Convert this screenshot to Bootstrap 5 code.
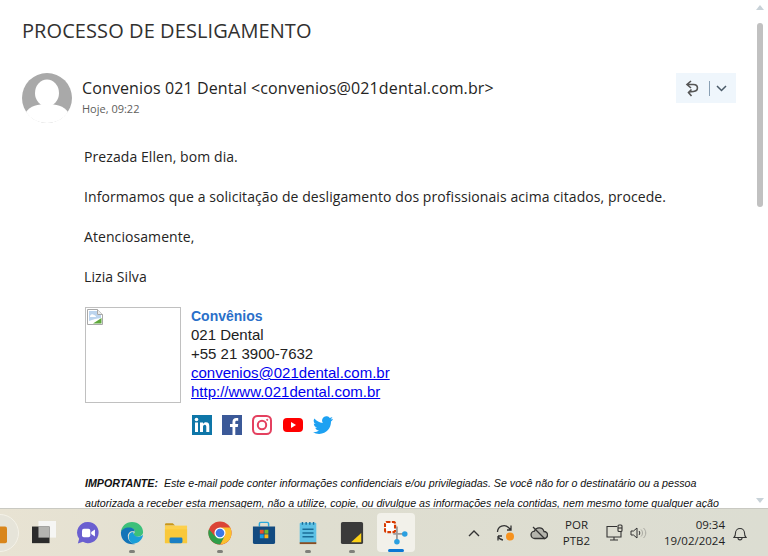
<!DOCTYPE html>
<html lang="pt-BR">
<head>
  <meta charset="UTF-8" />
  <meta name="viewport" content="width=device-width, initial-scale=1.0"/>
  <title>PROCESSO DE DESLIGAMENTO</title>
  <link href="https://cdn.jsdelivr.net/npm/bootstrap@5.3.2/dist/css/bootstrap.min.css" rel="stylesheet"/>
  <style>
    html, body { height: 100%; overflow: hidden; }
    body { font-family: "Open Sans", "Noto Sans", sans-serif; color: #252423; background: #fff; }
    .mail-window { height: 508px; overflow: hidden; }
    .mail-pane { padding: 17px 0 0 22px; overflow: hidden; }
    .mail-title { font-size: 20px; line-height: 28px; font-weight: 400; letter-spacing: .08px; margin: 0 0 28px; color: #323130; white-space: nowrap; }
    .mail-head { height: 50px; padding-right: 15px; }
    .mail-avatar { width: 50px; height: 50px; margin-right: 10px; flex: none; }
    .mail-from { font-size: 16px; line-height: 22px; letter-spacing: .12px; margin-top: 4px; white-space: nowrap; }
    .mail-date { font-size: 11px; line-height: 16px; color: #605e5c; margin-top: 2px; }
    .reply-box { width: 60px; height: 30px; background: #eff6fc; flex: none; }
    .reply-sep { width: 1px; height: 15px; background: #8aa0b4; margin: 0 6px 0 10px; }
    .mail-body { padding: 24px 0 0 63px; font-size: 14px; line-height: 20px; }
    .mail-body p { margin: 0 0 20px -1px; letter-spacing: .08px; white-space: nowrap; }
    .sig-photo { width: 96px; height: 96px; border: 1px solid #c0c0c0; padding: 1px; flex: none; margin-right: 10px; }
    .sig-text { font-family: "Liberation Sans", Arial, sans-serif; font-size: 15px; line-height: 19px; color: #212121; }
    .sig-text a { color: #0000ee; display: block; }
    .sig-name { color: #2a6fc9; font-size: 14px; line-height: 17px; padding-top: 1px; font-weight: 700; }
    .sig-social { gap: 10px; margin: 14px 0 0 1px; }
    .sig-social svg { display: block; width: 20px; height: 20px; }
    .sig-social .sig-yt { margin-left: 1px; }
    .mail-legal { font-family: "Liberation Sans", Arial, sans-serif; font-style: italic; font-size: 10.67px; line-height: 20px; color: #111; margin-top: 38px; width: 640px; }
    .mail-legal p { margin: 0; letter-spacing: 0; white-space: nowrap; }
    .scroll-rail { width: 17px; flex: none; padding-top: 5px; }
    .scroll-thumb { width: 6px; height: 184px; background: #c1c1c1; border-radius: 3px; margin: 13px auto 0; }
    .scroll-up { width: 0; height: 0; margin: 0 auto; border: 4px solid transparent; border-top: 0; border-bottom: 5px solid #c8d2d8; }
    .scroll-down { width: 0; height: 0; margin: 0 auto 5px; border: 4px solid transparent; border-bottom: 0; border-top: 5px solid #c8d2d8; }
    .task-bar { height: 48px; background: linear-gradient(90deg, #e8e3d3 0%, #dfded0 40%, #dcddd2 100%); border-top: 1px solid #c9c9c2; color: #1f1f1f; }
    .task-apps { margin-left: -22px; }
    .task-app { width: 44px; height: 47px; position: relative; }
    .task-app svg { display: block; width: 24px; height: 24px; }
    .task-dot { position: absolute; left: 19px; bottom: 3px; width: 6px; height: 3px; border-radius: 2px; background: #80807a; }
    .task-current { background: #f2f1ea; border-radius: 4px; height: 39px; margin: 4px 3px 0; width: 38px; }
    .task-current .task-dot { left: 11px; width: 16px; background: #0a78d4; bottom: 0; }
    .task-ball { width: 38px; height: 38px; border-radius: 50%; background: #e6e4d9; border: 1px solid #f4f2e8; flex: none; }
    .task-ball svg { margin-right: 11px; }
    .tray-item { height: 47px; flex: none; }
    .tray-item svg { display: block; }
    .tray-lang { width: 43px; font-size: 11.5px; line-height: 16px; text-align: center; }
    .tray-chev { width: 32px; }
    .tray-sync { width: 32px; }
    .tray-cloud { width: 33px; }
    .tray-net { width: 21px; margin-left: 6px; }
    .tray-vol { width: 22px; margin-left: 2px; }
    .tray-clock { width: 76px; font-size: 11.5px; line-height: 16px; text-align: right; }
    .tray-bell { width: 30px; margin-right: 13px; }
  </style>
</head>
<body class="d-flex flex-column">

  <!-- Mail -->
  <div class="mail-window d-flex">
    <div class="mail-pane flex-grow-1">
      <h1 class="mail-title">PROCESSO DE DESLIGAMENTO</h1>

      <div class="mail-head d-flex align-items-start">
        <svg class="mail-avatar" viewBox="0 0 50 50">
          <circle cx="25" cy="25" r="25" fill="#a9a9a9"/>
          <ellipse cx="25" cy="20" rx="12" ry="13.5" fill="#fff"/>
          <path d="M4 39c4-6 12-8 21-8s17 2 21 8c-4.500 7-12 11-21 11S8.500 46 4 39z" fill="#fff"/>
        </svg>
        <div class="flex-grow-1">
          <div class="mail-from">Convenios 021 Dental &lt;convenios@021dental.com.br&gt;</div>
          <div class="mail-date">Hoje, 09:22</div>
        </div>
        <div class="reply-box d-flex align-items-center justify-content-center">
          <svg width="14" height="17" viewBox="0 0 14 17" fill="none" stroke="#555" stroke-width="1.600">
            <path d="M6 1 2 4.500 6 8M2 4.500h6.500c5 0 5.500 6.500 0 7L4 12"/>
            <path d="M6.500 9.500 3.500 12.500l3 3.500"/>
          </svg>
          <span class="reply-sep"></span>
          <svg width="11" height="7" viewBox="0 0 11 7" fill="none" stroke="#4a5a68" stroke-width="1.500"><path d="M1 1l4.500 4.500L10 1"/></svg>
        </div>
      </div>

      <div class="mail-body">
        <p>Prezada Ellen, bom dia.</p>
        <p>Informamos que a solicitação de desligamento dos profissionais acima citados, procede.</p>
        <p>Atenciosamente,</p>
        <p>Lizia Silva</p>

        <div class="d-flex">
          <div class="sig-photo">
            <svg width="16" height="16" viewBox="0 0 16 16" class="d-block">
              <path d="M.5.500h10l5 5v10H.5z" fill="#fff" stroke="#a8a8a8"/>
              <path d="M2 2h8v4h4v3l-6 1-6 2z" fill="#bcd4ee"/>
              <path d="M3 7c1-2 3-2 4-1 1 0 2 1 2 2H3z" fill="#fff"/>
              <path d="M6 14.500 14.500 9v5.500z" fill="#5fa83c"/>
              <path d="M10.500.5v5h5" fill="#ececec" stroke="#a8a8a8"/>
            </svg>
          </div>
          <div class="sig-text">
            <div class="sig-name">Convênios</div>
            <div>021 Dental</div>
            <div>+55 21 3900-7632</div>
            <a href="#">convenios@021dental.com.br</a>
            <a href="#">http://www.021dental.com.br</a>
            <div class="sig-social d-flex">
              <svg viewBox="0 0 20 20"><rect width="20" height="20" fill="#0e76a8"/><rect x="3" y="7.500" width="3" height="9.500" fill="#fff"/><circle cx="4.500" cy="4.500" r="1.800" fill="#fff"/><path d="M8 7.500h3v1.400c.6-1 1.700-1.700 3-1.700 2.500 0 3.300 1.600 3.300 4V17h-3v-5c0-1.200-.3-2.200-1.500-2.200s-1.800 1-1.800 2.200v5H8z" fill="#fff"/></svg>
              <svg viewBox="0 0 20 20"><rect width="20" height="20" fill="#3b5998"/><path d="M10.500 20v-8H8V9h2.500V6.800C10.500 4.300 12 3 14.200 3c1 0 1.800.1 2 .1v2.600h-1.500c-1.100 0-1.400.6-1.400 1.400V9h2.900l-.4 3h-2.500v8z" fill="#fff"/></svg>
              <svg viewBox="0 0 20 20" fill="none" stroke="#e4405f" stroke-width="2"><rect x="1" y="1" width="18" height="18" rx="4.500"/><circle cx="10" cy="10" r="4.200"/><circle cx="15.200" cy="4.800" r=".6" fill="#e4405f" stroke-width="1"/></svg>
              <svg viewBox="0 0 20 20" class="sig-yt"><rect y="3" width="20" height="14" rx="4" fill="#f00"/><path d="M8 7l5 3-5 3z" fill="#fff"/></svg>
              <svg viewBox="0 0 20 20"><path d="M20 3.800c-.7.300-1.500.5-2.400.6.900-.5 1.500-1.300 1.800-2.300-.8.500-1.700.8-2.600 1A4.100 4.100 0 0 0 9.800 7.900 11.600 11.600 0 0 1 1.400 3.600a4.100 4.100 0 0 0 1.300 5.500c-.7 0-1.300-.2-1.900-.5 0 2 1.400 3.700 3.300 4.100-.6.200-1.200.2-1.900.1.500 1.600 2 2.800 3.800 2.800A8.200 8.200 0 0 1 0 17.300 11.600 11.600 0 0 0 6.300 19c7.500 0 11.700-6.400 11.700-11.900v-.5c.8-.6 1.500-1.300 2-2.800z" fill="#1da1f2"/></svg>
            </div>
          </div>
        </div>

        <div class="mail-legal">
          <p><b>IMPORTANTE:</b>&nbsp; Este e-mail pode conter informações confidenciais e/ou privilegiadas. Se você não for o destinatário ou a pessoa</p>
          <p>autorizada a receber esta mensagem, não a utilize, copie, ou divulgue as informações nela contidas, nem mesmo tome qualquer ação</p>
        </div>
      </div>
    </div>

    <!-- Scrollbar -->
    <div class="scroll-rail d-flex flex-column">
      <div class="scroll-up"></div>
      <div class="scroll-thumb"></div>
      <div class="scroll-down mt-auto"></div>
    </div>
  </div>

  <!-- Windows taskbar -->
  <div class="task-bar d-flex justify-content-between">
    <div class="task-apps d-flex">
      <div class="task-app d-flex align-items-center justify-content-center">
        <div class="task-ball d-flex align-items-center justify-content-end">
          <svg viewBox="0 0 26 26"><rect x="8" y="6" width="18" height="18" rx="2" fill="#d9861c"/></svg>
        </div>
      </div>
      <div class="task-app d-flex align-items-center justify-content-center">
        <svg viewBox="0 0 26 26"><rect x="7" y="0" width="19" height="18" fill="#f6f6f4"/><rect x="0" y="6" width="19" height="18" fill="#2b2b2b"/><rect x="7" y="6" width="12" height="12" fill="#b4b4b0"/></svg>
      </div>
      <div class="task-app d-flex align-items-center justify-content-center">
        <svg viewBox="0 0 26 26"><path d="M13 1a11.500 11.500 0 1 1-5.500 21.600L2 24.500l1.400-5.300A11.500 11.500 0 0 1 13 1z" fill="#6a5fd0"/><rect x="6.500" y="8.500" width="9" height="9" rx="2" fill="#fff"/><path d="M16.500 12l4-2.800v7.600l-4-2.800z" fill="#fff"/></svg>
      </div>
      <div class="task-app d-flex align-items-center justify-content-center">
        <svg viewBox="0 0 26 26"><path d="M1 13C1 6 6.500 1 13 1c7 0 12 5 12 11 0 3-2.500 5-6 5-2.500 0-4-1-4-2.500 0-1 1-1.500 1-3C16 9 14 7.500 11.500 7.500 6 7.500 1 10 1 13z" fill="#3cc07a"/><path d="M1 13c0-4 4.500-6 9-6 3 0 6 1.500 6 4.500-4-1.500-7.500 1-7.500 5 0 3.500 2.500 7.500 8 8.500C8 26.500 1 21 1 13z" fill="#1274b8"/><path d="M9.500 17c0-3 2-5 5-5 0 2 1.500 5 5 5 2.500 0 4.500-1 5.500-2-.5 5-5 9.500-10 9.500-3 0-5.500-3.500-5.500-7.500z" fill="#1a9fd8"/></svg>
        <span class="task-dot"></span>
      </div>
      <div class="task-app d-flex align-items-center justify-content-center">
        <svg viewBox="0 0 26 26"><path d="M1 4a1.500 1.500 0 0 1 1.500-1.500h7L12 5h-11z" fill="#c9971c"/><path d="M1 5h24v19H1z" fill="#fdd04c"/><path d="M1 9h24v15H1z" fill="#f9c83a"/><rect x="6" y="18" width="14" height="6" rx="1.500" fill="#1a7fc4"/></svg>
      </div>
      <div class="task-app d-flex align-items-center justify-content-center">
        <svg viewBox="0 0 26 26"><circle cx="13" cy="13" r="12.500" fill="#db4437"/><path d="M13 13 2.200 19.300A12.500 12.500 0 0 0 13 25.500l5-8z" fill="#2e9e48"/><path d="M13 7h11a12.500 12.500 0 0 1-10.500 18.500L19 14z" fill="#fbc02d"/><path d="M2.200 19.300A12.500 12.500 0 0 1 1 9l7 8z" fill="#2e9e48"/><circle cx="13" cy="13" r="6" fill="#fff"/><circle cx="13" cy="13" r="4.700" fill="#3b78e7"/></svg>
        <span class="task-dot"></span>
      </div>
      <div class="task-app d-flex align-items-center justify-content-center">
        <svg viewBox="0 0 26 26"><path d="M8 6V3a1.500 1.500 0 0 1 1.500-1.500h7A1.500 1.500 0 0 1 18 3v3" fill="none" stroke="#2aa8dc" stroke-width="1.600"/><path d="M1 6h24v17a2 2 0 0 1-2 2H3a2 2 0 0 1-2-2z" fill="#124a80"/><rect x="8.500" y="9.500" width="4.200" height="4.200" fill="#e8512b"/><rect x="13.500" y="9.500" width="4.200" height="4.200" fill="#7ab829"/><rect x="8.500" y="14.500" width="4.200" height="4.200" fill="#1a9fe0"/><rect x="13.500" y="14.500" width="4.200" height="4.200" fill="#fcb814"/></svg>
      </div>
      <div class="task-app d-flex align-items-center justify-content-center">
        <svg viewBox="0 0 26 26"><rect x="4" y="2" width="18" height="22" rx="1" fill="#5cc0e4"/><rect x="4" y="23" width="18" height="2" fill="#8a4d22"/><path d="M7 1v3M11 1v3M15 1v3M19 1v3" stroke="#1a6d98" stroke-width="1.500"/><path d="M7 9h12M7 13h12M7 17h12" stroke="#1a6d98" stroke-width="1.600"/></svg>
        <span class="task-dot"></span>
      </div>
      <div class="task-app d-flex align-items-center justify-content-center">
        <svg viewBox="0 0 26 26"><rect x="1" y="1" width="24" height="24" rx="2" fill="#3a3a3a"/><path d="M23 13v10h-11z" fill="#fcd116"/></svg>
        <span class="task-dot"></span>
      </div>
      <div class="task-app task-current d-flex align-items-center justify-content-center">
        <svg viewBox="0 0 26 26">
          <rect x="1" y="1" width="11" height="11" rx="2" fill="#fff" stroke="#d83b01" stroke-width="2.400" stroke-dasharray="4 1.500"/>
          <path d="M10 14H24M14 6V22" stroke="#9c9c9c" stroke-width="2"/>
          <circle cx="22.500" cy="14" r="3" fill="#2a9fe0"/><circle cx="14" cy="22.500" r="3" fill="#2a9fe0"/>
        </svg>
        <span class="task-dot"></span>
      </div>
    </div>

    <div class="d-flex">
      <div class="tray-item tray-chev d-flex align-items-center justify-content-center">
        <svg width="12" height="8" viewBox="0 0 12 8" fill="none" stroke="#333" stroke-width="1.400"><path d="M1 7l5-5 5 5"/></svg>
      </div>
      <div class="tray-item tray-sync d-flex align-items-center justify-content-center">
        <svg width="20" height="18" viewBox="0 0 20 18" fill="none" stroke="#333" stroke-width="1.300">
          <path d="M1.500 8a6.500 6.500 0 0 1 11-4.500L15 6M15 1.500V6h-4"/>
          <path d="M2 12v4.500M2 12h4M2 12.500A6.500 6.500 0 0 0 7 16"/>
          <circle cx="14" cy="12.500" r="4" fill="#f6921e" stroke="none"/>
        </svg>
      </div>
      <div class="tray-item tray-cloud d-flex align-items-center justify-content-center">
        <svg width="18" height="14" viewBox="0 0 18 14" fill="none" stroke="#333" stroke-width="1.300">
          <path d="M5 12.500a3.700 3.700 0 0 1-.5-7.400A5 5 0 0 1 14 5.500a3.500 3.500 0 0 1 0 7z" fill="#b4b4ac"/>
          <path d="M3 1l12 12"/>
        </svg>
      </div>
      <div class="tray-item tray-lang d-flex flex-column justify-content-center">
        <div>POR</div><div>PTB2</div>
      </div>
      <div class="tray-item tray-net d-flex align-items-center justify-content-center">
        <svg width="18" height="17" viewBox="0 0 18 17" fill="none" stroke="#333" stroke-width="1.100">
          <path d="M11 2.500H1v10.500h14V8"/><path d="M8 13v3M4 16h8"/><rect x="12" y="1" width="4" height="6.500" rx="1" fill="#dfded0"/><path d="M12 4h4"/>
        </svg>
      </div>
      <div class="tray-item tray-vol d-flex align-items-center justify-content-center">
        <svg width="17" height="14" viewBox="0 0 17 14" fill="none" stroke="#333" stroke-width="1">
          <path d="M1 5h2.500L7 2v10L3.500 9H1z"/>
          <path d="M9 5c1 1 1 3 0 4" />
          <path d="M11 3.500c2 2 2 5 0 7M13.500 2c3 3 3 7 0 10" stroke="#a8a8a0"/>
        </svg>
      </div>
      <div class="tray-item tray-clock d-flex flex-column justify-content-center">
        <div>09:34</div><div>19/02/2024</div>
      </div>
      <div class="tray-item tray-bell d-flex align-items-center justify-content-center">
        <svg width="14" height="16" viewBox="0 0 14 16" fill="none" stroke="#333" stroke-width="1.100">
          <path d="M1 12.500c1-1 1.500-2 1.500-4.500a4.500 4.500 0 0 1 9 0c0 2.500.5 3.500 1.500 4.500z"/><path d="M5 13c0 2.500 4 2.500 4 0"/>
        </svg>
      </div>
    </div>
  </div>

  <script src="https://cdn.jsdelivr.net/npm/bootstrap@5.3.2/dist/js/bootstrap.bundle.min.js"></script>
</body>
</html>
